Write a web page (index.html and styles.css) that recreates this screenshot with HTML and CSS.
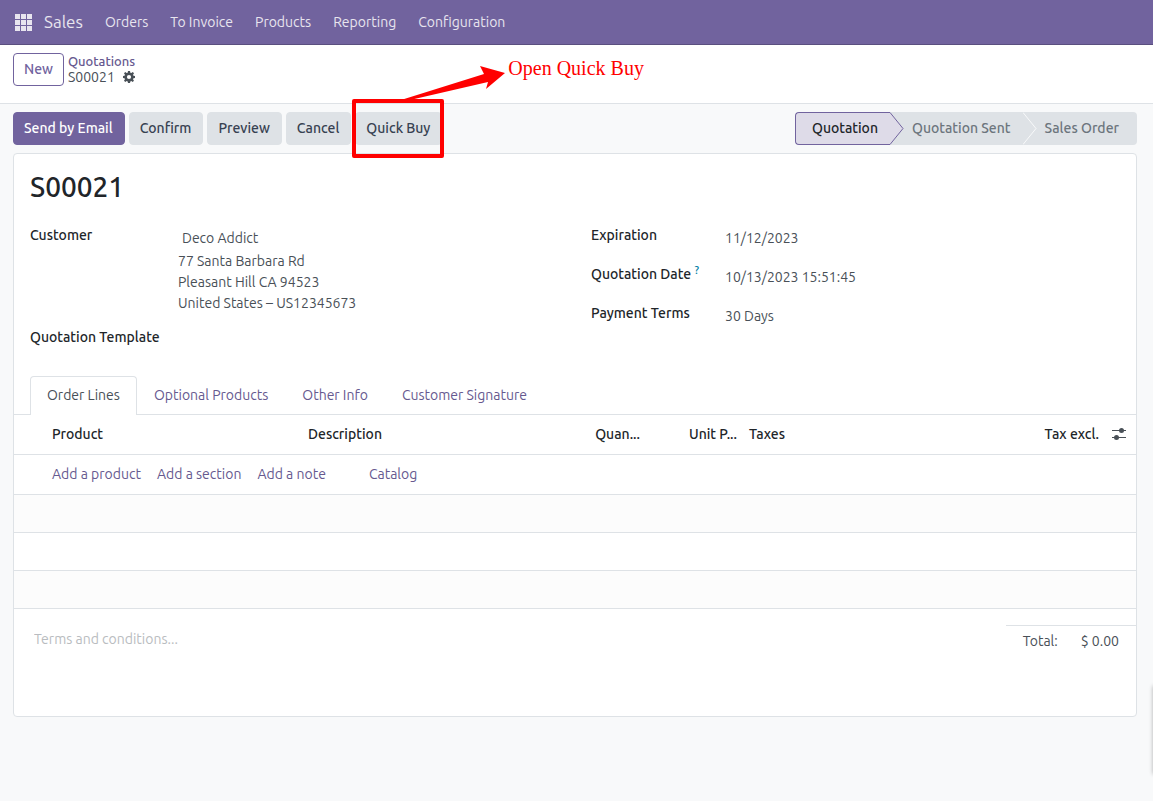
FILE: index.html
```html
<!DOCTYPE html>
<html lang="en">
<head>
<meta charset="utf-8">
<title>S00021 - Quotations</title>
<link rel="stylesheet" href="styles.css">
</head>
<body>
<header class="navbar">
  <button class="apps" aria-label="Apps">
    <svg width="17" height="17" viewBox="0 0 17 17" fill="currentColor"><path d="M0 0h5v5H0zM6 0h5v5H6zM12 0h5v5h-5zM0 6h5v5H0zM6 6h5v5H6zM12 6h5v5h-5zM0 12h5v5H0zM6 12h5v5H6zM12 12h5v5h-5z"/></svg>
  </button>
  <a class="brand" href="#">Sales</a>
  <nav class="menu">
    <a href="#">Orders</a>
    <a href="#">To Invoice</a>
    <a href="#">Products</a>
    <a href="#">Reporting</a>
    <a href="#">Configuration</a>
  </nav>
</header>

<div class="control-panel">
  <button class="btn btn-outline">New</button>
  <div class="breadcrumb">
    <a href="#">Quotations</a>
    <div class="current">
      <span>S00021</span>
      <button class="gear" aria-label="Actions">
        <svg width="12" height="12" viewBox="0 0 12 12" fill="currentColor" fill-rule="evenodd"><path d="M5 0h2l.35 1.65 1 .42L9.8 1.1l1.2 1.2-.95 1.4.4 1L12 5v2l-1.55.35-.42 1 .92 1.4L9.7 11l-1.4-.92-.95.4L7 12H5l-.35-1.52-1-.42L2.3 11 1 9.7l.95-1.35-.4-1L0 7V5l1.55-.3.4-1L1 2.3 2.3 1.1l1.35.95 1-.4zM6 3.9a2.1 2.1 0 1 0 0 4.2 2.1 2.1 0 0 0 0-4.2z"/></svg>
      </button>
    </div>
  </div>
</div>

<main class="content">
  <div class="statusbar">
    <div class="actions">
      <button class="btn btn-primary">Send by Email</button>
      <button class="btn">Confirm</button>
      <button class="btn">Preview</button>
      <button class="btn">Cancel</button>
      <div class="callout">
        <button class="btn">Quick Buy</button>
        <div class="callout-box"></div>
        <svg class="callout-arrow" width="104" height="36" viewBox="0 0 104 36" fill="#f00"><path d="M0 34L83 8L79 0L104 7L85 23L87 16L9 34z"/></svg>
        <span class="callout-text">Open Quick Buy</span>
      </div>
    </div>
    <div class="stages">
      <button class="stage active">Quotation</button>
      <svg class="chevron" width="14" height="33" viewBox="0 0 14 33"><path d="M0 0H14V33H0z" fill="#dee2e6"/><path d="M0 .5L13 16.5L0 32.5z" fill="#dedbe8"/><path d="M0 .5L13 16.5L0 32.5" fill="none" stroke="#71639e"/></svg>
      <button class="stage">Quotation Sent</button>
      <svg class="chevron" width="14" height="33" viewBox="0 0 14 33"><path d="M0 0H14V33H0z" fill="#dee2e6"/><path d="M0 .5L13 16.5L0 32.5" fill="none" stroke="#f8f9fa"/></svg>
      <button class="stage last">Sales Order</button>
    </div>
  </div>

  <section class="sheet">
    <h1>S00021</h1>
    <div class="groups">
      <div class="group group-left">
        <label for="customer">Customer</label>
        <div class="value">
          <input id="customer" class="boxed" value="Deco Addict">
          <address>77 Santa Barbara Rd<br>Pleasant Hill CA 94523<br>United States – US12345673</address>
        </div>
        <label for="template">Quotation Template</label>
        <input id="template">
      </div>
      <div class="group group-right">
        <label for="expiration">Expiration</label>
        <input id="expiration" value="11/12/2023">
        <label for="date">Quotation Date <sup>?</sup></label>
        <input id="date" value="10/13/2023 15:51:45">
        <label for="terms">Payment Terms</label>
        <input id="terms" value="30 Days">
      </div>
    </div>

    <nav class="tabs">
      <a class="tab selected" href="#">Order Lines</a>
      <a class="tab" href="#">Optional Products</a>
      <a class="tab" href="#">Other Info</a>
      <a class="tab" href="#">Customer Signature</a>
    </nav>

    <table class="lines">
      <colgroup><col class="c-handle"><col class="c-product"><col class="c-desc"><col class="c-qty"><col class="c-price"><col><col class="c-opt"></colgroup>
      <thead>
        <tr>
          <th></th><th>Product</th><th>Description</th><th class="num">Quan...</th><th class="num">Unit P...</th>
          <th><div class="pair"><span>Taxes</span><span>Tax excl.</span></div></th>
          <th class="opt"><button class="options" aria-label="Optional columns"><svg width="14" height="12" viewBox="0 0 14 12" fill="#495057"><path d="M0 2h14v1H0zM0 9h14v1H0z"/><circle cx="9.5" cy="2.5" r="2.5"/><circle cx="4.5" cy="9.5" r="2.5"/></svg></button></th>
        </tr>
      </thead>
      <tbody>
        <tr class="add"><td></td><td colspan="6"><div class="add-links"><a href="#">Add a product</a><a href="#">Add a section</a><a href="#">Add a note</a><a class="catalog" href="#">Catalog</a></div></td></tr>
        <tr class="blank odd"><td colspan="7"></td></tr>
        <tr class="blank"><td colspan="7"></td></tr>
        <tr class="blank odd"><td colspan="7"></td></tr>
      </tbody>
    </table>

    <div class="footer">
      <textarea aria-label="Terms and conditions" placeholder="Terms and conditions..."></textarea>
      <div class="total"><span>Total:</span><span>$ 0.00</span></div>
    </div>
  </section>
</main>
<div class="edge-panel"></div>
</body>
</html>
```
FILE: styles.css
```css
* { box-sizing: border-box; }
body {
  margin: 0;
  min-height: 100vh;
  background: #f8f9fa;
  color: #495057;
  font: 14px/21px "Ubuntu", "Noto Sans", sans-serif;
}
a { color: #66598f; text-decoration: none; }
button, input, textarea { font: inherit; color: inherit; border: 0; background: none; padding: 0; margin: 0; }
svg { display: block; }

.navbar {
  display: flex;
  align-items: center;
  height: 45px;
  padding: 0 15px;
  background: #71639e;
  border-bottom: 1px solid #5a4f7f;
}
.navbar a { color: #e8e5ef; }
.apps { color: #e8e5ef; }
.brand { margin: 0 0 2px 12px; font-size: 17px; }
.menu { display: flex; gap: 22px; margin-left: 22px; }

.control-panel {
  display: flex;
  align-items: flex-start;
  gap: 4px;
  height: 59px;
  padding: 8px 13px;
  background: #fff;
  border-bottom: 1px solid #dee2e6;
}
.breadcrumb { line-height: 16px; }
.breadcrumb a { display: block; font-size: 13px; font-weight: 500; }
.current { display: flex; align-items: center; gap: 8px; }

.btn {
  height: 33px;
  padding: 0 11px 0 10px;
  border: 1px solid #dee2e6;
  border-radius: 4px;
  background: #dee2e6;
  color: #374151;
  font-weight: 500;
  white-space: nowrap;
}
.btn-outline { padding: 0 10px; background: #fff; border-color: #71639e; color: #71639e; }
.btn-primary { background: #71639e; border-color: #71639e; color: #fff; }

.content { padding: 8px 16px 16px 13px; }
.statusbar { display: flex; justify-content: space-between; margin-bottom: 8px; }
.actions { display: flex; gap: 4px; }
.callout { position: relative; }
.callout-box { position: absolute; inset: -13px -2px -13px -3px; border: 4px solid #f00; border-radius: 2px; }
.callout-arrow { position: absolute; left: 46px; top: -46px; }
.callout-text { position: absolute; left: 153px; top: -56px; color: #f00; font: 20px/24px "Liberation Serif", serif; white-space: nowrap; }

.stages { display: flex; }
.stage { height: 33px; padding: 0 12px 0 8px; background: #dee2e6; color: #6c757d; font-weight: 500; white-space: nowrap; }
.stage.active { padding-left: 16px; background: #dedbe8; border: solid #71639e; border-width: 1px 0 1px 1px; border-radius: 4px 0 0 4px; color: #212529; }
.stage.last { padding-right: 18px; border-radius: 0 4px 4px 0; }

.sheet { background: #fff; border: 1px solid #dee2e6; border-radius: 4px; }
h1 { margin: 16px 16px 0; font-size: 28px; line-height: 34px; font-weight: 500; color: #212529; }
.groups { display: grid; grid-template-columns: 1fr 1fr; margin: 21px 16px 0; }
.group { display: grid; align-content: start; }
.group-left { grid-template-columns: 148px 1fr; row-gap: 13px; }
.group-right { grid-template-columns: 134px 1fr; row-gap: 14px; margin-left: 16px; }
.group label { color: #212529; font-weight: 500; line-height: 21px; }
.group input { display: block; width: 100%; height: 25px; }
.group input.boxed { padding: 0 4px; }
address { font-style: normal; margin-top: 1px; }
sup { color: #0180a5; font-size: 11px; line-height: 1; vertical-align: 5px; }

.tabs { display: flex; padding: 0 16px; margin-top: 24px; border-bottom: 1px solid #dee2e6; }
.tab { height: 38px; padding: 8px 16px; border: 1px solid transparent; border-bottom: 0; white-space: nowrap; }
.selected { height: 39px; margin-bottom: -1px; border-color: #dee2e6; border-radius: 4px 4px 0 0; background: #fff; color: #495057; }

.lines { width: 100%; table-layout: fixed; border-collapse: separate; border-spacing: 0; }
.lines th, .lines td { padding: 0 6px; border-bottom: 1px solid #dee2e6; text-align: left; }
.lines th { height: 40px; color: #212529; font-weight: 500; white-space: nowrap; }
.lines th.num { text-align: right; }
.lines th.opt { padding: 0; }
.c-handle { width: 32px; }
.c-product { width: 256px; }
.c-desc { width: 284px; }
.c-qty { width: 60px; }
.c-price { width: 97px; }
.c-opt { width: 31px; }
.pair { display: flex; justify-content: space-between; }
.options { display: block; margin: 0 0 2px 7px; }
.add td { height: 40px; }
.add-links { display: flex; gap: 16px; }
.catalog { margin-left: 27px; }
.blank td { height: 38px; }
.odd td { background: #fcfcfc; }

.footer { display: flex; justify-content: space-between; align-items: flex-start; padding: 16px 0 0 20px; }
textarea { flex: 1; height: 91px; padding-top: 4px; resize: none; }
textarea::placeholder { color: #b9bcc0; opacity: 1; }
.total { display: flex; gap: 23px; padding: 5px 17px; border-top: 1px solid #dee2e6; }
.edge-panel { position: fixed; right: -10px; top: 686px; width: 10px; height: 88px; box-shadow: 0 0 4px rgba(0, 0, 0, .3); }
```
